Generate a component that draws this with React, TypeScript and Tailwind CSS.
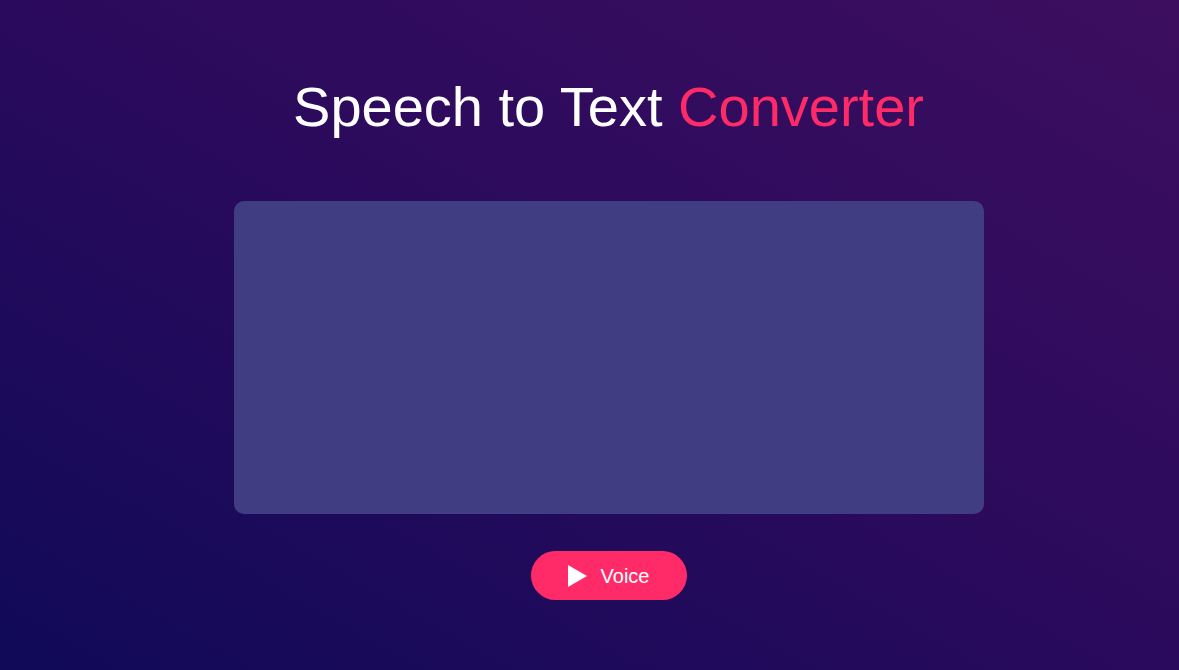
import React from "react";

export default function App() {
  return (
    <div
      className="min-h-[670px] w-full bg-[linear-gradient(to_top_right,#100a58,#2a0a5c_50%,#3d0e60)] pl-[38px] pt-[75px]"
      style={{ fontFamily: '"Liberation Sans", Arial, sans-serif' }}
    >
      <div className="flex flex-col items-center">
        <h1 className="text-[56px] leading-[64px] text-white">
          Speech to Text <span className="text-[#ff2a68]">Converter</span>
        </h1>
        <textarea
          className="mt-[62px] h-[313px] w-[750px] resize-none rounded-[10px] bg-[#403d82] p-4 text-white outline-none"
          readOnly
        />
        <button className="mt-[37px] flex h-[49px] w-[156px] items-center justify-center gap-[14px] rounded-full bg-[#ff2a68] text-[20px] text-white">
          <svg width="19" height="22" viewBox="0 0 19 22">
            <path d="M0 0 L19 11 L0 22 Z" fill="white" />
          </svg>
          Voice
        </button>
      </div>
    </div>
  );
}
